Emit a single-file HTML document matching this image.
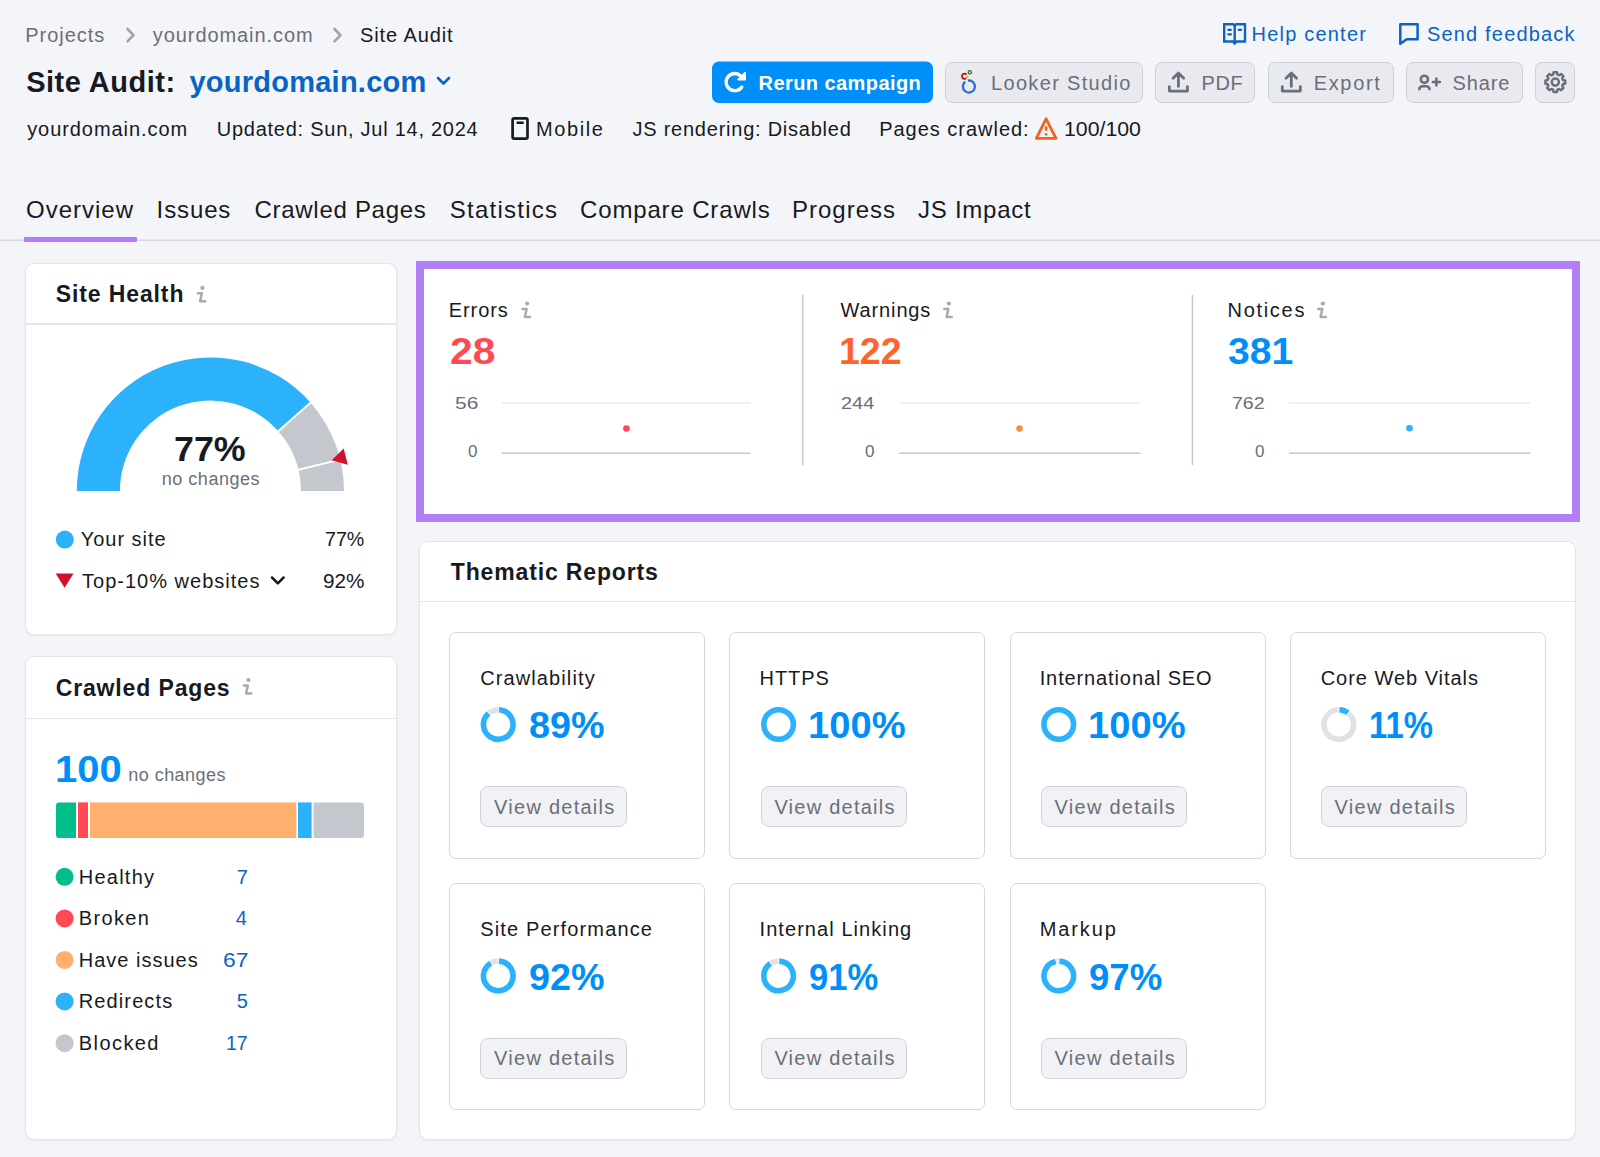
<!DOCTYPE html>
<html><head><meta charset="utf-8"><style>
*{margin:0;padding:0;box-sizing:border-box}
html,body{width:1600px;height:1157px;overflow:hidden;background:#f4f5f9;font-family:"Liberation Sans",sans-serif}
.abs{position:absolute}
.t{position:absolute;white-space:pre;font-family:"Liberation Sans",sans-serif}
.btn{position:absolute;top:61.5px;height:41px;border-radius:7px;background:#e9eaef;border:1px solid #cdd0d7}
.card{position:absolute;background:#fff;border-radius:8px;box-shadow:0 0 0 1px #e4e5ea,0 1px 3px rgba(0,0,0,0.11)}
.hdiv{position:absolute;height:1.5px;background:#e4e5ea}
.sub{position:absolute;width:256px;height:227px;border:1px solid #d6d8de;border-radius:7px;background:#fff}
.vbtn{position:absolute;width:146.4px;height:41.2px;border:1px solid #d1d3da;border-radius:8px;background:#f1f2f5}
</style></head><body>
<!-- header icons -->
<svg class="abs" style="left:0;top:0" width="1600" height="250" viewBox="0 0 1600 250">
<path d="M127.5 29L133.5 35.2L127.5 41.4" fill="none" stroke="#a0a3ab" stroke-width="2.6" stroke-linecap="round" stroke-linejoin="round"/>
<path d="M334.5 29L340.5 35.2L334.5 41.4" fill="none" stroke="#a0a3ab" stroke-width="2.6" stroke-linecap="round" stroke-linejoin="round"/>
<path d="M438 78L443.5 83.5L449 78" fill="none" stroke="#0a64c4" stroke-width="2.6" stroke-linecap="round" stroke-linejoin="round"/>
<!-- help book -->
<g fill="none" stroke="#0a64c4" stroke-width="2.4">
<path d="M1224.2 24.2H1233.2L1234.7 25.7L1236.2 24.2H1245V41.5H1236.5L1234.7 43.5L1232.9 41.5H1224.2Z" stroke-linejoin="miter"/>
<path d="M1234.7 25.5V43"/>
</g>
<g stroke="#0a64c4" stroke-width="2.2" stroke-linecap="round">
<path d="M1228.3 29.8H1230.9M1228.3 34.4H1230.9M1238.6 29.8H1241.2"/>
</g>
<path d="M1442.5 0" />
<path d="M1400.3 24.3H1417.6V39.2H1406.8L1400.3 43.8Z" fill="none" stroke="#0a64c4" stroke-width="2.5" stroke-linejoin="round"/>
<!-- rerun button -->
<rect x="712" y="61.5" width="221" height="41.5" rx="7" fill="#008ff8"/>
<path d="M740.8 76.0A8.6 8.6 0 1 0 741.8 87.0" fill="none" stroke="#fff" stroke-width="3.3" stroke-linecap="round"/>
<path d="M745.0 72.9V79.6H738.3Z" fill="#fff" stroke="#fff" stroke-width="2" stroke-linejoin="round"/>
</svg>
<div class="btn" style="left:945px;width:198px"></div>
<div class="btn" style="left:1155px;width:100px"></div>
<div class="btn" style="left:1267.5px;width:126px"></div>
<div class="btn" style="left:1406px;width:116.5px"></div>
<div class="btn" style="left:1535px;width:40px"></div>
<svg class="abs" style="left:0;top:0" width="1600" height="250" viewBox="0 0 1600 250">
<!-- looker -->
<path d="M967.86 80.59A6.0 6.0 0 1 1 965.21 81.77" fill="none" stroke="#2a6fd6" stroke-width="2.3"/>
<path d="M966.2 78.2A2.6 2.6 0 1 1 966.6 74.6" fill="none" stroke="#a8191c" stroke-width="1.8"/>
<circle cx="969.8" cy="72.2" r="1.6" fill="none" stroke="#2a7d3f" stroke-width="1.4"/>
<circle cx="967.3" cy="77" r="1.3" fill="#e8b72c"/>
<!-- upload icons -->
<g fill="none" stroke="#6c6e79" stroke-width="2.8" stroke-linecap="round" stroke-linejoin="round">
<path d="M1178.4 86.4V73.2M1173.1 78.3L1178.4 73L1183.7 78.3M1169.4 86.6V91.1H1187.4V86.6"/>
<path d="M1291.3 86.4V73.2M1286.0 78.3L1291.3 73L1296.6 78.3M1282.3 86.6V91.1H1300.3V86.6"/>
</g>
<!-- share -->
<g fill="none" stroke="#6c6e79" stroke-width="2.6" stroke-linecap="round">
<circle cx="1424.4" cy="79.3" r="3.6"/>
<path d="M1419.3 90.3V89.5A3.2 3.2 0 0 1 1422.5 86.3H1426.3A3.2 3.2 0 0 1 1429.5 89.5V90.3" stroke-linecap="butt"/>
<path d="M1436.4 78.5V85.5M1432.9 82H1439.9"/>
</g>
<!-- gear -->
<g transform="translate(1555.3 82.1)" fill="none" stroke="#6c6e79" stroke-width="2.5" stroke-linejoin="round">
<path d="M-2.18 -7.59 L-1.65 -9.86 L1.65 -9.86 L2.18 -7.59 L3.83 -6.91 L5.81 -8.14 L8.14 -5.81 L6.91 -3.83 L7.59 -2.18 L9.86 -1.65 L9.86 1.65 L7.59 2.18 L6.91 3.83 L8.14 5.81 L5.81 8.14 L3.83 6.91 L2.18 7.59 L1.65 9.86 L-1.65 9.86 L-2.18 7.59 L-3.83 6.91 L-5.81 8.14 L-8.14 5.81 L-6.91 3.83 L-7.59 2.18 L-9.86 1.65 L-9.86 -1.65 L-7.59 -2.18 L-6.91 -3.83 L-8.14 -5.81 L-5.81 -8.14 L-3.83 -6.91Z"/>
<circle cx="0" cy="0" r="3.6"/>
</g>
<!-- mobile -->
<rect x="512.6" y="118.3" width="14.9" height="20.4" rx="1.6" fill="none" stroke="#171a22" stroke-width="2.7"/>
<path d="M517.6 122.8H522.8" stroke="#171a22" stroke-width="2.4" stroke-linecap="round"/>
<!-- warning -->
<path d="M1046.1 118.8L1036.3 138.3H1056Z" fill="none" stroke="#f2621f" stroke-width="2.8" stroke-linejoin="round"/>
<path d="M1046.1 126.2V130.8M1046.1 133.3V135.4" stroke="#f2621f" stroke-width="2.6"/>
<!-- tabs -->
<rect x="0" y="239.5" width="1600" height="1.5" fill="#d6d8de"/>
<rect x="24" y="237" width="113" height="5" rx="1" fill="#b47cf9"/>
</svg>

<!-- cards -->
<div class="card" style="left:26px;top:264px;width:370px;height:369.5px"></div>
<div class="hdiv" style="left:26px;top:323px;width:370px"></div>
<div class="card" style="left:26px;top:657px;width:370px;height:481.5px"></div>
<div class="hdiv" style="left:26px;top:717.5px;width:370px"></div>
<div class="abs" style="left:416px;top:261px;width:1164px;height:261px;border:8px solid #b27ff7;background:#fff"></div>
<div class="card" style="left:419.5px;top:542px;width:1155.5px;height:596.5px"></div>
<div class="hdiv" style="left:419.5px;top:600.5px;width:1155.5px"></div>
<div class="sub" style="left:449.0px;top:631.5px"></div>
<div class="vbtn" style="left:480.4px;top:786.3px"></div>
<div class="sub" style="left:729.3px;top:631.5px"></div>
<div class="vbtn" style="left:760.7px;top:786.3px"></div>
<div class="sub" style="left:1009.5px;top:631.5px"></div>
<div class="vbtn" style="left:1040.9px;top:786.3px"></div>
<div class="sub" style="left:1289.5px;top:631.5px"></div>
<div class="vbtn" style="left:1320.9px;top:786.3px"></div>
<div class="sub" style="left:449.0px;top:882.9px"></div>
<div class="vbtn" style="left:480.4px;top:1037.7px"></div>
<div class="sub" style="left:729.3px;top:882.9px"></div>
<div class="vbtn" style="left:760.7px;top:1037.7px"></div>
<div class="sub" style="left:1009.5px;top:882.9px"></div>
<div class="vbtn" style="left:1040.9px;top:1037.7px"></div>

<svg class="abs" style="left:0;top:0" width="400" height="640" viewBox="0 0 400 640">
<path d="M76.80 491.00A133.6 133.6 0 0 1 310.61 402.65L278.29 431.15A90.5 90.5 0 0 0 119.90 491.00Z" fill="#2cb1fb"/>
<path d="M310.61 402.65A133.6 133.6 0 0 1 344.00 491.00L300.90 491.00A90.5 90.5 0 0 0 278.29 431.15Z" fill="#c5c7cf"/>
<line x1="276.78" y1="432.47" x2="312.12" y2="401.33" stroke="#fff" stroke-width="2"/>
<line x1="296.42" y1="470.19" x2="342.20" y2="459.11" stroke="#fff" stroke-width="2"/>
<path d="M331.6 460.3L343.7 448.6L347.8 464.7Z" fill="#d1102e"/>
</svg>
<svg class="abs" style="left:0;top:0" width="1600" height="1157" viewBox="0 0 1600 1157">
<!-- site health legend -->
<circle cx="64.8" cy="539.6" r="9" fill="#2cb1fb"/>
<path d="M55.7 573.5H73.5L64.6 587.7Z" fill="#d1102e"/>
<path d="M272 577.5L277.8 583.3L283.6 577.5" fill="none" stroke="#171a22" stroke-width="2.5" stroke-linecap="round" stroke-linejoin="round"/>
<!-- crawled bar -->
<path d="M59 802.4H76V838H59A3 3 0 0 1 56 835V805.4A3 3 0 0 1 59 802.4Z" fill="#00bf8b"/>
<rect x="78" y="802.4" width="10" height="35.6" fill="#ff4953"/>
<rect x="90" y="802.4" width="206.4" height="35.6" fill="#ffb06f"/>
<rect x="298" y="802.4" width="13.6" height="35.6" fill="#2cb1fb"/>
<path d="M313.6 802.4H361A3 3 0 0 1 364 805.4V835A3 3 0 0 1 361 838H313.6Z" fill="#c5c7cf"/>
<circle cx="64.6" cy="876.8" r="9" fill="#00bf8b"/>
<circle cx="64.6" cy="918.4" r="9" fill="#ff4953"/>
<circle cx="64.6" cy="959.9" r="9" fill="#ffb06f"/>
<circle cx="64.6" cy="1001.4" r="9" fill="#2cb1fb"/>
<circle cx="64.6" cy="1043.2" r="9" fill="#c5c7cf"/>
<!-- info icons -->
<g transform="translate(197.5 285.9)"><circle cx="4.9" cy="2.0" r="2.1" fill="#a7aab2"/><path d="M0.3 7.4H4.3L2.6 15.4H7.8" fill="none" stroke="#a7aab2" stroke-width="2.5" stroke-linecap="round" stroke-linejoin="round"/></g>
<g transform="translate(243.5 678)"><circle cx="4.9" cy="2.0" r="2.1" fill="#a7aab2"/><path d="M0.3 7.4H4.3L2.6 15.4H7.8" fill="none" stroke="#a7aab2" stroke-width="2.5" stroke-linecap="round" stroke-linejoin="round"/></g>
<g transform="translate(522.3 301.5)"><circle cx="4.9" cy="2.0" r="2.1" fill="#a7aab2"/><path d="M0.3 7.4H4.3L2.6 15.4H7.8" fill="none" stroke="#a7aab2" stroke-width="2.5" stroke-linecap="round" stroke-linejoin="round"/></g>
<g transform="translate(944 301.5)"><circle cx="4.9" cy="2.0" r="2.1" fill="#a7aab2"/><path d="M0.3 7.4H4.3L2.6 15.4H7.8" fill="none" stroke="#a7aab2" stroke-width="2.5" stroke-linecap="round" stroke-linejoin="round"/></g>
<g transform="translate(1318 301.5)"><circle cx="4.9" cy="2.0" r="2.1" fill="#a7aab2"/><path d="M0.3 7.4H4.3L2.6 15.4H7.8" fill="none" stroke="#a7aab2" stroke-width="2.5" stroke-linecap="round" stroke-linejoin="round"/></g>
<!-- errors charts -->
<rect x="501.4" y="402.5" width="249.3" height="1" fill="#e2e3e8"/>
<rect x="501.4" y="452.5" width="249.3" height="1.5" fill="#c5c7cf"/>
<circle cx="626.4" cy="428.5" r="3.3" fill="#ff4953"/>
<rect x="801.9" y="295" width="1.5" height="170" fill="#c5c7cf"/>
<rect x="899.2" y="402.5" width="241.4" height="1" fill="#e2e3e8"/>
<rect x="899.2" y="452.5" width="241.4" height="1.5" fill="#c5c7cf"/>
<circle cx="1019.5" cy="428.5" r="3.3" fill="#ff8a3d"/>
<rect x="1191.7" y="295" width="1.5" height="170" fill="#c5c7cf"/>
<rect x="1289" y="402.5" width="241.6" height="1" fill="#e2e3e8"/>
<rect x="1289" y="452.5" width="241.6" height="1.5" fill="#c5c7cf"/>
<circle cx="1409.5" cy="428.3" r="3.3" fill="#2cb1fb"/>
<path d="M498.90 709.71A14.8 14.8 0 1 1 488.57 713.30" fill="none" stroke="#2cb1fb" stroke-width="5.6"/><path d="M489.07 712.89A14.8 14.8 0 0 1 497.93 709.70" fill="none" stroke="#e1e2e7" stroke-width="5.6"/><circle cx="778.55" cy="724.5" r="14.8" fill="none" stroke="#2cb1fb" stroke-width="5.6"/><circle cx="1058.75" cy="724.5" r="14.8" fill="none" stroke="#2cb1fb" stroke-width="5.6"/><path d="M1339.40 709.71A14.8 14.8 0 0 1 1347.93 712.89" fill="none" stroke="#2cb1fb" stroke-width="5.6"/><path d="M1348.43 713.30A14.8 14.8 0 1 1 1338.43 709.70" fill="none" stroke="#e1e2e7" stroke-width="5.6"/><path d="M498.90 961.11A14.8 14.8 0 1 1 490.84 963.09" fill="none" stroke="#2cb1fb" stroke-width="5.6"/><path d="M491.40 962.78A14.8 14.8 0 0 1 497.93 961.10" fill="none" stroke="#e1e2e7" stroke-width="5.6"/><path d="M779.20 961.11A14.8 14.8 0 1 1 770.35 963.58" fill="none" stroke="#2cb1fb" stroke-width="5.6"/><path d="M770.89 963.23A14.8 14.8 0 0 1 778.23 961.10" fill="none" stroke="#e1e2e7" stroke-width="5.6"/><path d="M1059.40 961.11A14.8 14.8 0 1 1 1055.66 961.43" fill="none" stroke="#2cb1fb" stroke-width="5.6"/><path d="M1056.29 961.31A14.8 14.8 0 0 1 1058.43 961.10" fill="none" stroke="#e1e2e7" stroke-width="5.6"/>
</svg>
<span class="t" style="left:25.2px;top:24.8px;font-size:20px;line-height:20px;color:#6c6e79;letter-spacing:0.99px">Projects</span>
<span class="t" style="left:152.8px;top:24.8px;font-size:20px;line-height:20px;color:#6c6e79;letter-spacing:0.92px">yourdomain.com</span>
<span class="t" style="left:360.0px;top:24.8px;font-size:20px;line-height:20px;color:#171a22;letter-spacing:0.90px">Site Audit</span>
<span class="t" style="left:26.2px;top:68.0px;font-size:29px;line-height:29px;color:#171a22;font-weight:700;letter-spacing:0.50px">Site Audit:</span>
<span class="t" style="left:189.5px;top:68.0px;font-size:29px;line-height:29px;color:#0a64c4;font-weight:700;letter-spacing:0.24px">yourdomain.com</span>
<span class="t" style="left:1251.5px;top:23.6px;font-size:20px;line-height:20px;color:#0a64c4;letter-spacing:1.21px">Help center</span>
<span class="t" style="left:1427.0px;top:23.6px;font-size:20px;line-height:20px;color:#0a64c4;letter-spacing:1.17px">Send feedback</span>
<span class="t" style="left:758.6px;top:72.5px;font-size:20px;line-height:20px;color:#ffffff;font-weight:700;letter-spacing:0.42px">Rerun campaign</span>
<span class="t" style="left:991.0px;top:72.5px;font-size:20px;line-height:20px;color:#6c6e79;letter-spacing:1.33px">Looker Studio</span>
<span class="t" style="left:1201.5px;top:72.5px;font-size:20px;line-height:20px;color:#6c6e79;letter-spacing:0.60px">PDF</span>
<span class="t" style="left:1313.7px;top:72.5px;font-size:20px;line-height:20px;color:#6c6e79;letter-spacing:1.66px">Export</span>
<span class="t" style="left:1452.4px;top:72.5px;font-size:20px;line-height:20px;color:#6c6e79;letter-spacing:0.90px">Share</span>
<span class="t" style="left:27.2px;top:119.2px;font-size:20px;line-height:20px;color:#171a22;letter-spacing:0.93px">yourdomain.com</span>
<span class="t" style="left:216.8px;top:119.2px;font-size:20px;line-height:20px;color:#171a22;letter-spacing:0.74px">Updated: Sun, Jul 14, 2024</span>
<span class="t" style="left:536.0px;top:119.2px;font-size:20px;line-height:20px;color:#171a22;letter-spacing:1.60px">Mobile</span>
<span class="t" style="left:632.5px;top:119.2px;font-size:20px;line-height:20px;color:#171a22;letter-spacing:0.76px">JS rendering: Disabled</span>
<span class="t" style="left:879.2px;top:119.2px;font-size:20px;line-height:20px;color:#171a22;letter-spacing:0.98px">Pages crawled:</span>
<span class="t" style="left:1063.7px;top:119.2px;font-size:20px;line-height:20px;color:#171a22;transform:scaleX(1.0634);transform-origin:0 0">100/100</span>
<span class="t" style="left:26.0px;top:197.5px;font-size:24px;line-height:24px;color:#171a22;letter-spacing:1.00px">Overview</span>
<span class="t" style="left:156.6px;top:197.5px;font-size:24px;line-height:24px;color:#171a22;letter-spacing:0.88px">Issues</span>
<span class="t" style="left:254.5px;top:197.5px;font-size:24px;line-height:24px;color:#171a22;letter-spacing:0.71px">Crawled Pages</span>
<span class="t" style="left:449.8px;top:197.5px;font-size:24px;line-height:24px;color:#171a22;letter-spacing:1.24px">Statistics</span>
<span class="t" style="left:580.0px;top:197.5px;font-size:24px;line-height:24px;color:#171a22;letter-spacing:0.85px">Compare Crawls</span>
<span class="t" style="left:792.0px;top:197.5px;font-size:24px;line-height:24px;color:#171a22;letter-spacing:1.00px">Progress</span>
<span class="t" style="left:918.0px;top:197.5px;font-size:24px;line-height:24px;color:#171a22;letter-spacing:0.75px">JS Impact</span>
<span class="t" style="left:55.8px;top:283.3px;font-size:23px;line-height:23px;color:#171a22;font-weight:700;letter-spacing:0.88px">Site Health</span>
<span class="t" style="left:174.4px;top:431.3px;font-size:35px;line-height:35px;color:#171a22;font-weight:700;transform:scaleX(1.0221);transform-origin:0 0">77%</span>
<span class="t" style="left:161.8px;top:469.6px;font-size:18px;line-height:18px;color:#6c6e79;letter-spacing:0.51px">no changes</span>
<span class="t" style="left:80.7px;top:529.4px;font-size:20px;line-height:20px;color:#171a22;letter-spacing:0.99px">Your site</span>
<span class="t" style="left:325.0px;top:529.4px;font-size:20px;line-height:20px;color:#171a22;transform:scaleX(0.9821);transform-origin:0 0">77%</span>
<span class="t" style="left:82.1px;top:570.7px;font-size:20px;line-height:20px;color:#171a22;letter-spacing:1.00px">Top-10% websites</span>
<span class="t" style="left:322.9px;top:570.7px;font-size:20px;line-height:20px;color:#171a22;transform:scaleX(1.0359);transform-origin:0 0">92%</span>
<span class="t" style="left:55.7px;top:676.8px;font-size:23px;line-height:23px;color:#171a22;font-weight:700;letter-spacing:0.86px">Crawled Pages</span>
<span class="t" style="left:55.2px;top:752.0px;font-size:36px;line-height:36px;color:#008ff8;font-weight:700;transform:scaleX(1.1105);transform-origin:0 0">100</span>
<span class="t" style="left:128.2px;top:766.3px;font-size:18px;line-height:18px;color:#6c6e79;letter-spacing:0.48px">no changes</span>
<span class="t" style="left:78.8px;top:866.7px;font-size:20px;line-height:20px;color:#171a22;letter-spacing:1.23px">Healthy</span>
<span class="t" style="left:78.8px;top:908.3px;font-size:20px;line-height:20px;color:#171a22;letter-spacing:1.34px">Broken</span>
<span class="t" style="left:78.8px;top:949.8px;font-size:20px;line-height:20px;color:#171a22;letter-spacing:0.99px">Have issues</span>
<span class="t" style="left:78.8px;top:991.3px;font-size:20px;line-height:20px;color:#171a22;letter-spacing:1.11px">Redirects</span>
<span class="t" style="left:78.8px;top:1033.1px;font-size:20px;line-height:20px;color:#171a22;letter-spacing:1.42px">Blocked</span>
<span class="t" style="left:236.7px;top:866.7px;font-size:20px;line-height:20px;color:#0a64c4">7</span>
<span class="t" style="left:235.7px;top:908.3px;font-size:20px;line-height:20px;color:#0a64c4">4</span>
<span class="t" style="left:222.8px;top:949.8px;font-size:20px;line-height:20px;color:#0a64c4;transform:scaleX(1.1400);transform-origin:0 0">67</span>
<span class="t" style="left:236.7px;top:991.3px;font-size:20px;line-height:20px;color:#0a64c4">5</span>
<span class="t" style="left:226.3px;top:1033.1px;font-size:20px;line-height:20px;color:#0a64c4;transform:scaleX(0.9700);transform-origin:0 0">17</span>
<span class="t" style="left:448.7px;top:300.0px;font-size:20px;line-height:20px;color:#171a22;letter-spacing:0.94px">Errors</span>
<span class="t" style="left:450.4px;top:334.0px;font-size:36px;line-height:36px;color:#ff4953;font-weight:700;transform:scaleX(1.1316);transform-origin:0 0">28</span>
<span class="t" style="left:454.8px;top:394.5px;font-size:17px;line-height:17px;color:#6c6e79;transform:scaleX(1.2353);transform-origin:0 0">56</span>
<span class="t" style="left:468.0px;top:443.4px;font-size:17px;line-height:17px;color:#6c6e79">0</span>
<span class="t" style="left:840.6px;top:300.0px;font-size:20px;line-height:20px;color:#171a22;letter-spacing:0.86px">Warnings</span>
<span class="t" style="left:838.5px;top:333.8px;font-size:36px;line-height:36px;color:#ff642d;font-weight:700;transform:scaleX(1.0421);transform-origin:0 0">122</span>
<span class="t" style="left:841.3px;top:394.5px;font-size:17px;line-height:17px;color:#6c6e79;transform:scaleX(1.1704);transform-origin:0 0">244</span>
<span class="t" style="left:865.1px;top:443.4px;font-size:17px;line-height:17px;color:#6c6e79">0</span>
<span class="t" style="left:1227.5px;top:300.0px;font-size:20px;line-height:20px;color:#171a22;letter-spacing:1.70px">Notices</span>
<span class="t" style="left:1228.4px;top:333.8px;font-size:36px;line-height:36px;color:#008ff8;font-weight:700;transform:scaleX(1.0862);transform-origin:0 0">381</span>
<span class="t" style="left:1231.9px;top:394.5px;font-size:17px;line-height:17px;color:#6c6e79;transform:scaleX(1.1481);transform-origin:0 0">762</span>
<span class="t" style="left:1255.0px;top:443.4px;font-size:17px;line-height:17px;color:#6c6e79">0</span>
<span class="t" style="left:450.8px;top:561.0px;font-size:23px;line-height:23px;color:#171a22;font-weight:700;letter-spacing:0.85px">Thematic Reports</span>
<span class="t" style="left:480.2px;top:667.5px;font-size:20px;line-height:20px;color:#171a22;letter-spacing:1.11px">Crawlability</span>
<span class="t" style="left:528.9px;top:708.2px;font-size:36px;line-height:36px;color:#008ff8;font-weight:700;transform:scaleX(1.0486);transform-origin:0 0">89%</span>
<span class="t" style="left:494.1px;top:796.9px;font-size:20px;line-height:20px;color:#6c6e79;letter-spacing:1.25px">View details</span>
<span class="t" style="left:759.5px;top:667.5px;font-size:20px;line-height:20px;color:#171a22;letter-spacing:0.95px">HTTPS</span>
<span class="t" style="left:808.1px;top:708.2px;font-size:36px;line-height:36px;color:#008ff8;font-weight:700;transform:scaleX(1.0596);transform-origin:0 0">100%</span>
<span class="t" style="left:774.4px;top:796.9px;font-size:20px;line-height:20px;color:#6c6e79;letter-spacing:1.25px">View details</span>
<span class="t" style="left:1039.7px;top:667.5px;font-size:20px;line-height:20px;color:#171a22;letter-spacing:0.88px">International SEO</span>
<span class="t" style="left:1088.3px;top:708.2px;font-size:36px;line-height:36px;color:#008ff8;font-weight:700;transform:scaleX(1.0596);transform-origin:0 0">100%</span>
<span class="t" style="left:1054.6px;top:796.9px;font-size:20px;line-height:20px;color:#6c6e79;letter-spacing:1.25px">View details</span>
<span class="t" style="left:1320.7px;top:667.5px;font-size:20px;line-height:20px;color:#171a22;letter-spacing:0.97px">Core Web Vitals</span>
<span class="t" style="left:1368.6px;top:708.2px;font-size:36px;line-height:36px;color:#008ff8;font-weight:700;transform:scaleX(0.9134);transform-origin:0 0">11%</span>
<span class="t" style="left:1334.6px;top:796.9px;font-size:20px;line-height:20px;color:#6c6e79;letter-spacing:1.25px">View details</span>
<span class="t" style="left:480.2px;top:918.9px;font-size:20px;line-height:20px;color:#171a22;letter-spacing:1.15px">Site Performance</span>
<span class="t" style="left:528.9px;top:959.6px;font-size:36px;line-height:36px;color:#008ff8;font-weight:700;transform:scaleX(1.0486);transform-origin:0 0">92%</span>
<span class="t" style="left:494.1px;top:1048.3px;font-size:20px;line-height:20px;color:#6c6e79;letter-spacing:1.25px">View details</span>
<span class="t" style="left:759.5px;top:918.9px;font-size:20px;line-height:20px;color:#171a22;letter-spacing:1.07px">Internal Linking</span>
<span class="t" style="left:809.2px;top:959.6px;font-size:36px;line-height:36px;color:#008ff8;font-weight:700;transform:scaleX(0.9600);transform-origin:0 0">91%</span>
<span class="t" style="left:774.4px;top:1048.3px;font-size:20px;line-height:20px;color:#6c6e79;letter-spacing:1.25px">View details</span>
<span class="t" style="left:1039.7px;top:918.9px;font-size:20px;line-height:20px;color:#171a22;letter-spacing:1.90px">Markup</span>
<span class="t" style="left:1089.4px;top:959.6px;font-size:36px;line-height:36px;color:#008ff8;font-weight:700;transform:scaleX(1.0171);transform-origin:0 0">97%</span>
<span class="t" style="left:1054.6px;top:1048.3px;font-size:20px;line-height:20px;color:#6c6e79;letter-spacing:1.25px">View details</span>
</body></html>
